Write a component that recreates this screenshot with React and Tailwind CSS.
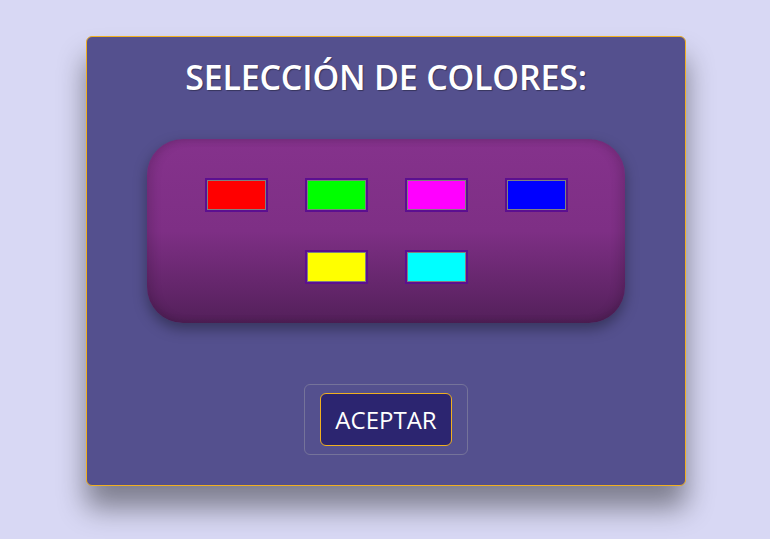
import React from 'react';

const colores = ['#ff0000', '#00ff00', '#ff00ff', '#0000ff', '#ffff00', '#00ffff'];

export default function App() {
  return (
    <div className="min-h-[539px] w-full bg-[#d8d8f4] pt-9" style={{ fontFamily: '"Open Sans", "Noto Sans", sans-serif' }}>
      <div className="ml-[86px] flex h-[450px] w-[600px] flex-col items-center rounded-[6px] border border-[#f0b020] bg-[#54508e] shadow-[0_22px_28px_rgba(0,0,0,0.42)]">
        <h1 className="mt-[17px] text-[34px] font-semibold leading-[46px] tracking-[-0.2px] text-white [text-shadow:1px_1px_1px_rgba(0,0,0,0.35)]">
          SELECCIÓN DE COLORES:
        </h1>

        {/* paleta */}
        <div className="mt-[39px] flex h-[184px] w-[478px] flex-wrap content-start justify-center rounded-[36px] bg-[linear-gradient(to_bottom,#85328c_0%,#7e2f85_50%,#53205a_100%)] px-[20px] pt-[20px] shadow-[0_6px_14px_rgba(0,0,0,0.35),inset_6px_0_10px_rgba(0,0,0,0.12),inset_-6px_0_10px_rgba(0,0,0,0.12)]">
          {colores.map((c) => (
            <button
              key={c}
              type="button"
              className="mx-[18.5px] my-[19px] h-[34px] w-[63px] border-2 border-[#5c0f90] p-0"
            >
              <span className="block h-full w-full border border-[#808080]" style={{ backgroundColor: c }} />
            </button>
          ))}
        </div>

        <div className="mt-[61px] rounded-[6px] border border-[#75739a] px-[15px] py-[8px]">
          <button
            type="button"
            className="h-[53px] w-[132px] rounded-[6px] border border-[#f0b020] bg-[#2c2570] text-[24px] leading-none text-white"
          >
            ACEPTAR
          </button>
        </div>
      </div>
    </div>
  );
}
